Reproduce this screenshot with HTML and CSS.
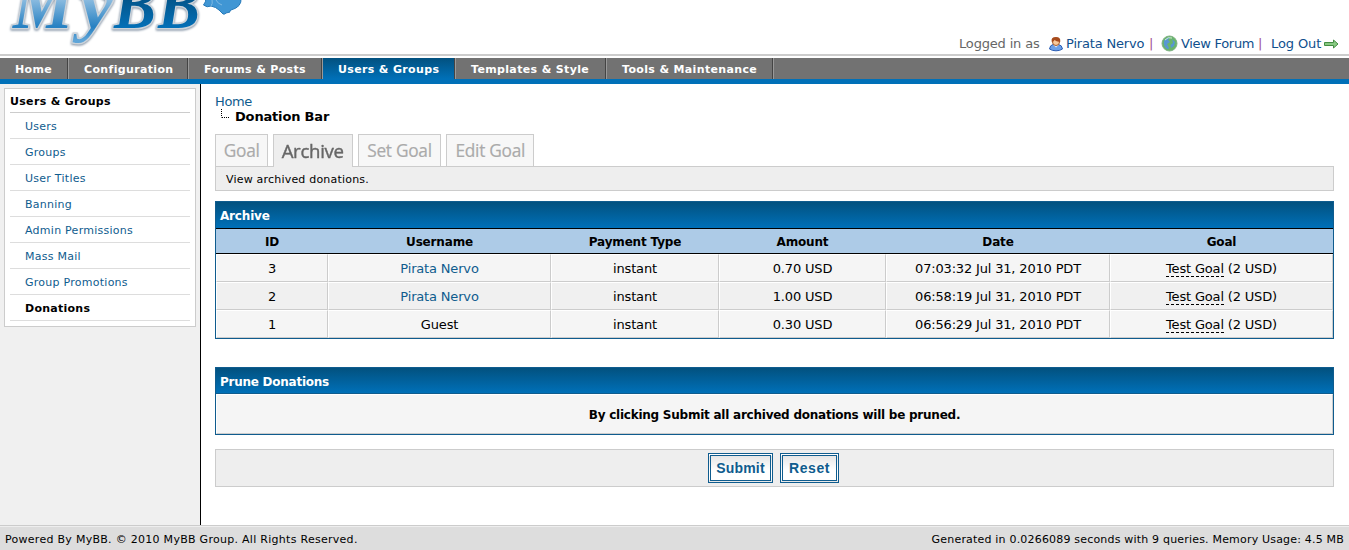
FILE: index.html
```html
<!DOCTYPE html>
<html lang="en">
<head>
<meta charset="utf-8">
<title>Donation Bar</title>
<link rel="stylesheet" href="styles.css">
</head>
<body>
<header class="header">
  <svg class="logo" width="260" height="54" viewBox="0 0 260 54" role="img" aria-label="MyBB">
    <defs>
      <linearGradient id="light" gradientUnits="userSpaceOnUse" x1="0" y1="-12" x2="0" y2="40"><stop offset="0" stop-color="#b5d4ec"/><stop offset=".75" stop-color="#2680c2"/><stop offset="1" stop-color="#5fa5d8"/></linearGradient>
      <linearGradient id="dark" gradientUnits="userSpaceOnUse" x1="0" y1="-8" x2="0" y2="28"><stop offset="0" stop-color="#034f80"/><stop offset="1" stop-color="#0370b8"/></linearGradient>
    </defs>
    <g class="logo-text"><text class="logo-light" x="13" y="28" textLength="60" lengthAdjust="spacingAndGlyphs">M</text><text class="logo-light" x="80" y="28" textLength="33" lengthAdjust="spacingAndGlyphs">y</text><text class="logo-dark" x="114" y="28" textLength="42" lengthAdjust="spacingAndGlyphs">B</text><text class="logo-dark" x="158" y="28" textLength="42" lengthAdjust="spacingAndGlyphs">B</text></g>
    <path d="M206 -2Q206 2 203.500 5Q207 8 211 6Q216 7 219 10L223 14Q225 14.500 226 13L230 12Q229 11 231 10Q242 7 241 -2Z" fill="#4096d4" stroke="#2579b9"/>
    <path d="M212 -1Q213 4 211 6M216 0Q218 4 222 5" fill="none" stroke="#7fb9e2" stroke-width="1"/>
  </svg>
  <div class="welcome">
    <span class="logged">Logged in as</span>
    <svg class="icon-user" width="16" height="16" viewBox="0 0 16 16"><path d="M1.500 13Q2 9 5 8.500H10.500Q14 9 14.500 13Q12 14.800 8 14.800Q4 14.800 1.500 13Z" fill="#6b9fe8" stroke="#2c5eb5"/><path d="M5.500 9L8 11.500L10.500 9" fill="#dce9fa"/><circle cx="8" cy="6" r="3.500" fill="#f9c99b" stroke="#a75a29"/><path d="M3.800 6Q2.500 1 8 1Q13 1 12.200 6Q8 5.500 6.500 4Q6 5.500 3.800 6Z" fill="#a74b1c"/></svg>
    <a class="w-user">Pirata Nervo</a><span class="pipe">|</span>
    <svg class="icon-globe" width="17" height="17" viewBox="0 0 17 17"><circle cx="8.500" cy="8.500" r="7.500" fill="#69b56c" stroke="#7fb183"/><path d="M3 6Q5 2 9 2.500L7 5L9 7L6 9L8 13L7 14.500Q2 12 3 6ZM11 4L14 7L13 11L10 13L9.500 10L12 8Z" fill="#5897d2"/><path d="M4 5Q7 1.500 11 3" fill="none" stroke="#d0ebd2"/></svg>
    <a class="w-forum">View Forum</a><span class="pipe">|</span>
    <a class="w-out">Log Out</a>
    <svg class="icon-arrow" width="15" height="10" viewBox="0 0 15 10"><path d="M.5 3.500H9.500V1L14 5L9.500 9V6.500H.5Z" fill="#88c982" stroke="#438d43"/></svg>
  </div>
</header>
<nav class="menu">
  <a class="m1">Home</a><a class="m2">Configuration</a><a class="m3">Forums &amp; Posts</a><a class="m4 active">Users &amp; Groups</a><a class="m5">Templates &amp; Style</a><a class="m6">Tools &amp; Maintenance</a>
</nav>
<div class="page">
  <aside class="side">
    <div class="side-box">
      <h2>Users &amp; Groups</h2>
      <a>Users</a><a>Groups</a><a>User Titles</a><a>Banning</a><a>Admin Permissions</a><a>Mass Mail</a><a>Group Promotions</a><a class="current">Donations</a>
    </div>
  </aside>
  <main class="content">
    <div class="crumb"><a>Home</a></div>
    <div class="crumb-current"><svg width="10" height="10" viewBox="0 0 10 10"><path d="M.5 0V8.500M1 8.500H9" fill="none" stroke="#000" stroke-dasharray="1 1"/></svg><b>Donation Bar</b></div>
    <div class="tabs"><a class="t1"><span>Goal</span></a><a class="t2 on"><span>Archive</span></a><a class="t3"><span>Set Goal</span></a><a class="t4"><span>Edit Goal</span></a></div>
    <div class="intro">View archived donations.</div>
    <section class="panel">
      <h3>Archive</h3>
      <div class="row head"><div>ID</div><div>Username</div><div>Payment Type</div><div>Amount</div><div>Date</div><div>Goal</div></div>
      <div class="row"><div>3</div><div><a>Pirata Nervo</a></div><div>instant</div><div>0.70 USD</div><div>07:03:32 Jul 31, 2010 PDT</div><div><abbr>Test Goal</abbr> (2 USD)</div></div>
      <div class="row alt"><div>2</div><div><a>Pirata Nervo</a></div><div>instant</div><div>1.00 USD</div><div>06:58:19 Jul 31, 2010 PDT</div><div><abbr>Test Goal</abbr> (2 USD)</div></div>
      <div class="row"><div>1</div><div>Guest</div><div>instant</div><div>0.30 USD</div><div>06:56:29 Jul 31, 2010 PDT</div><div><abbr>Test Goal</abbr> (2 USD)</div></div>
    </section>
    <section class="panel prune">
      <h3>Prune Donations</h3>
      <p>By clicking Submit all archived donations will be pruned.</p>
    </section>
    <div class="actions"><button class="submit">Submit</button><button class="reset">Reset</button></div>
  </main>
</div>
<footer class="footer"><span class="f1">Powered By MyBB. © 2010 MyBB Group. All Rights Reserved.</span><span class="f2">Generated in 0.0266089 seconds with 9 queries. Memory Usage: 4.5 MB</span></footer>
</body>
</html>
```
FILE: styles.css
```css
* { box-sizing: border-box; }
body { margin: 0; height: 550px; overflow: hidden; display: flex; flex-direction: column; background: #fff; color: #000; font: 13px/16px Verdana, "DejaVu Sans", sans-serif; letter-spacing: -0.17px; white-space: nowrap; }
a { color: #0f5c8e; }
.header { height: 58px; flex: none; display: flex; justify-content: space-between; background: linear-gradient(#ccc, #ccc) 0 54px / 100% 2px no-repeat; }
.logo text { font: italic bold 70px "Liberation Serif", serif; letter-spacing: 0; }
.logo-text { stroke: #ccd3da; stroke-width: 3px; paint-order: stroke; filter: drop-shadow(0 1px 1px #7d8da0); }
.logo-light { fill: url(#light); }
.logo-dark { fill: url(#dark); }
.welcome { display: flex; align-items: center; height: 17px; margin: 35px 10px 0 0; }
.logged { color: #666; width: 89px; }
.w-user { width: 84px; }
.w-forum { width: 78px; letter-spacing: -.3px; }
.welcome a { color: #0f4f8d; }
.pipe { color: #a04f90; width: 4px; margin-left: -1px; margin-right: 1px; }
.icon-user { margin-right: 2px; }
.icon-globe { margin: 0 3px 0 7px; }
.w-out { width: 52px; margin-left: 8px; margin-right: 1px; letter-spacing: -.1px; }
.menu { height: 26px; flex: none; display: flex; background: #727272; border-bottom: 5px solid #0070b8; font-size: 11px; font-weight: bold; line-height: 23px; letter-spacing: .35px; }
.menu a { color: #fff; height: 21px; border-left: 1px solid #999; border-right: 1px solid #444; padding-left: 15px; }
.menu .m1 { width: 68px; border-left-color: transparent; padding-left: 14px; }
.m2 { width: 120px; }
.m3 { width: 134px; }
.m4 { width: 133px; }
.m5 { width: 151px; }
.m6 { width: 167px; box-shadow: 1px 0 #999; }
.menu .active { background: linear-gradient(#02517f, #0070b8); }
.page { flex: 1; min-height: 0; display: flex; }
.side { width: 201px; flex: none; background: #f0f0f0; border-right: 1px solid #000; padding: 4px; }
.side-box { height: 239px; width: 192px; background: #fff; border: 1px solid #ccc; padding: 3px 5px; font-size: 11px; letter-spacing: .26px; display: flex; flex-direction: column; }
.side-box h2 { margin: 0; height: 21px; font-size: 11px; line-height: 20px; border-bottom: 1px solid #ccc; letter-spacing: .32px; }
.side-box a { height: 26px; line-height: 28px; padding-left: 15px; border-bottom: 1px solid #ddd; }
.side-box .current { color: #000; font-weight: bold; }
.content { width: 1119px; margin-left: 14px; padding-top: 9px; }
.crumb { height: 16px; line-height: 18px; letter-spacing: -.4px; }
.crumb-current { height: 25px; display: flex; padding-left: 6px; }
.crumb-current svg { margin-right: 4px; }
.tabs { display: flex; gap: 5px; height: 32px; }
.tabs a { border: 1px solid #ccc; border-bottom: 0; background: #f7f7f7; color: #aaa; height: 32px; display: flex; align-items: center; justify-content: center; font: 19px/28px "Open Sans", sans-serif; }
.tabs .on { position: relative; height: 33px; background: #eee; color: #666; }
.tabs span { transform: translateY(-1px) scaleX(.91); letter-spacing: -.3px; -webkit-text-stroke: .2px; }
.tabs .on span { transform: scaleX(.98); -webkit-text-stroke: .4px; }
.t1 { width: 53px; }
.t2 { width: 80px; }
.t3 { width: 83px; }
.t4 { width: 88px; }
.intro { height: 25px; background: #eee; border: 1px solid #ccc; font-size: 11px; line-height: 25px; padding-left: 10px; letter-spacing: .2px; }
.panel { margin-top: 10px; height: 138px; border: 1px solid #0f5c8e; }
.panel h3 { margin: 0; height: 27px; padding-left: 4px; background: linear-gradient(#02517f, #0070b8); color: #fff; border-bottom: 1px solid #000; font-size: 12px; line-height: 28px; }
.row { display: grid; grid-template-columns: 112px 223px 168px 167px 224px 223px; height: 28px; text-align: center; line-height: 28px; background: #f5f5f5; }
.row div { height: 28px; border: 1px solid; border-color: #fff #ccc #ccc #fff; }
.alt { background: #f0f0f0; }
.head { height: 25px; background: #adcbe7; border-bottom: 1px solid #000; font-weight: bold; font-size: 12px; line-height: 26px; }
.row.head div { height: 24px; border: 0; }
abbr { display: inline-block; line-height: 14px; border-bottom: 1px dashed #000; }
.prune { margin-top: 28px; height: 68px; }
.prune h3 { height: 26px; border-bottom-color: #0f5c8e; letter-spacing: -.25px; }
.prune p { margin: 0; height: 40px; border: 1px solid; border-color: #fff #ccc #ccc #fff; background: #f5f5f5; text-align: center; font-size: 12px; font-weight: bold; line-height: 40px; letter-spacing: -.24px; }
.actions { height: 38px; margin-top: 14px; display: flex; gap: 7px; justify-content: center; padding: 3px 2px 0 0; background: #eee; border: 1px solid #ccc; }
.actions button { width: 65px; height: 30px; padding: 0; border: 3px double #0f5c8e; background: linear-gradient(#e6e6e6, #fff 60%); color: #0f5c8e; font: bold 14px "Liberation Sans", sans-serif; letter-spacing: .2px; }
.actions .reset { width: 59px; letter-spacing: .6px; }
.footer { height: 25px; flex: none; display: flex; justify-content: space-between; padding: 0 5px; background: #ddd; border-top: 1px solid #ccc; box-shadow: inset 0 1px #eee; font-size: 11px; line-height: 27px; letter-spacing: .28px; }
.f2 { letter-spacing: .19px; }
```
